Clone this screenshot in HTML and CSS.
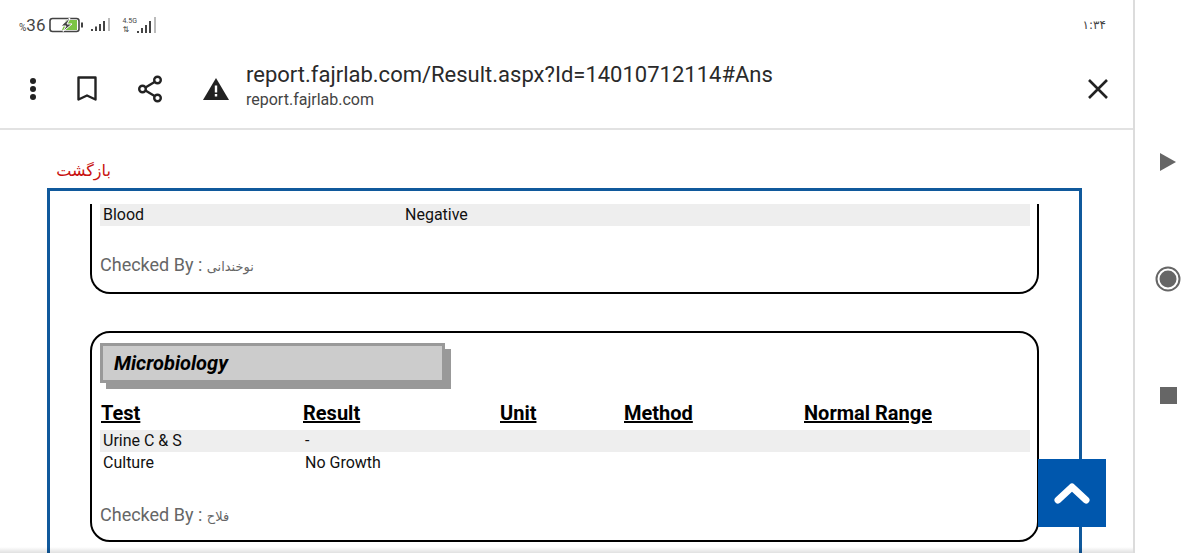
FILE: index.html
```html
<!DOCTYPE html>
<html lang="en">
<head>
    <meta charset="UTF-8">
    <meta name="viewport" content="width=device-width, initial-scale=1.0">
    <title>Result</title>
    <link rel="stylesheet" href="styles.css">
</head>
<body>
    <div class="screen">
        <div class="browser">
            <div class="status-bar">
                <div class="status-left">
                    <span class="battery-pct"><small>%</small>36</span>
                    <svg class="battery" width="36" height="16" viewBox="0 0 36 16">
                        <rect x="1" y="1.5" width="29" height="13" rx="2.5" fill="none" stroke="#444" stroke-width="1.6"/>
                        <path d="M17 3h11v10H13z" fill="#7cc444"/>
                        <path d="M20 1.5 12 9h5l-3 5.5L23 7h-5l3-5.5z" fill="#444" stroke="#fff" stroke-width="1"/>
                        <rect x="32" y="5.5" width="2" height="5" fill="#444"/>
                    </svg>
                    <svg class="signal" width="21" height="14" viewBox="0 0 21 14">
                        <path d="M0 13V11h2v2zM4 13V8.5h2V13zM8 13V6h2v7zM12 13V3h2v10z" fill="#444"/>
                        <path d="M17 13V0h2v13z" fill="#bbb"/>
                    </svg>
                    <div class="network">
                        <div class="network-label">
                            <span>4.5G</span>
                            <span class="arrows">⇅</span>
                        </div>
                        <svg width="21" height="17" viewBox="0 0 21 17">
                            <path d="M0 16v-2h2v2zM4 16v-5h2v5zM8 16V8h2v8zM12 16V4h2v12z" fill="#444"/>
                            <path d="M17 16V0h2v16z" fill="#bbb"/>
                        </svg>
                    </div>
                </div>
                <span class="clock">۱:۳۴</span>
            </div>
            <div class="toolbar">
                <div class="toolbar-icons">
                    <svg width="8" height="24" viewBox="0 0 8 24"><circle cx="4" cy="4" r="3" fill="#222"/><circle cx="4" cy="12" r="3" fill="#222"/><circle cx="4" cy="20" r="3" fill="#222"/></svg>
                    <svg width="20" height="26" viewBox="0 0 20 26"><path d="M1.5 1.5h17v22L10 19.5 1.5 23.5z" fill="none" stroke="#222" stroke-width="2.4" stroke-linejoin="round"/></svg>
                    <svg width="26" height="28" viewBox="0 0 26 28"><path d="M6 14 20 5.500M6 14l14 8.500" stroke="#222" stroke-width="2.400"/><circle cx="5.500" cy="14" r="3.300" fill="#fff" stroke="#222" stroke-width="2.400"/><circle cx="20.500" cy="5" r="3.300" fill="#fff" stroke="#222" stroke-width="2.400"/><circle cx="20.500" cy="23" r="3.300" fill="#fff" stroke="#222" stroke-width="2.400"/></svg>
                    <svg width="26" height="22" viewBox="0 0 26 22"><path d="M13 0 26 22H0z" fill="#222"/><path d="M11.800 7.500h2.400v7h-2.400zM11.800 16h2.400v2.500h-2.400z" fill="#fff"/></svg>
                </div>
                <div class="address">
                    <div class="address-url">report.fajrlab.com/Result.aspx?Id=14010712114#Ans</div>
                    <div class="address-host">report.fajrlab.com</div>
                </div>
                <svg class="close-icon" width="22" height="22" viewBox="0 0 22 22"><path d="M2 2l18 18M20 2 2 20" stroke="#222" stroke-width="2.600"/></svg>
            </div>
            <div class="page">
                <a class="back-link" dir="rtl">بازگشت</a>
                <div class="frame">
                    <div class="card card-cut">
                        <div class="row row-shaded">
                            <span class="col-test">Blood</span>
                            <span>Negative</span>
                        </div>
                        <div class="checked">Checked By : <span class="checked-name">نوخندانی</span></div>
                    </div>
                    <div class="card card-micro">
                        <div class="section-title">Microbiology</div>
                        <div class="table-head">
                            <span>Test</span>
                            <span>Result</span>
                            <span>Unit</span>
                            <span>Method</span>
                            <span>Normal Range</span>
                        </div>
                        <div class="row row-shaded">
                            <span class="col-result">Urine C &amp; S</span>
                            <span>-</span>
                        </div>
                        <div class="row">
                            <span class="col-result">Culture</span>
                            <span>No Growth</span>
                        </div>
                        <div class="checked checked-micro">Checked By : <span class="checked-name">فلاح</span></div>
                    </div>
                </div>
                <div class="to-top">
                    <svg width="36" height="24" viewBox="0 0 36 24"><path d="M4 19 18 6l14 13" fill="none" stroke="#fff" stroke-width="7" stroke-linecap="round" stroke-linejoin="round"/></svg>
                </div>
                <div class="bottom-fade"></div>
            </div>
        </div>
        <div class="nav-rail">
            <svg width="18" height="20" viewBox="0 0 18 20"><path d="M1 1 17 10 1 19z" fill="#666"/></svg>
            <svg width="26" height="26" viewBox="0 0 26 26"><circle cx="13" cy="13" r="11.500" fill="none" stroke="#666" stroke-width="2"/><circle cx="13" cy="13" r="8.500" fill="#666"/></svg>
            <svg width="17" height="17" viewBox="0 0 17 17"><rect width="17" height="17" fill="#666"/></svg>
        </div>
    </div>
</body>
</html>
```

FILE: styles.css
```css
* {
    margin: 0;
    padding: 0;
    box-sizing: border-box;
}

html, body {
    height: 553px;
    overflow: hidden;
}

body {
    font-family: Roboto, "DejaVu Sans", sans-serif;
    background: #fff;
    color: #111;
}

.screen {
    display: flex;
    height: 553px;
}

.browser {
    width: 1135px;
    height: 553px;
    border-right: 2px solid #dcdcdc;
    display: flex;
    flex-direction: column;
}

/* status bar */
.status-bar {
    height: 50px;
    padding: 0 27px 0 19px;
    display: flex;
    justify-content: space-between;
    align-items: center;
}

.status-left {
    display: flex;
    align-items: center;
    color: #444;
}

.battery-pct {
    font-size: 17px;
}

.battery-pct small {
    font-size: 10px;
}

.battery {
    margin-left: 4px;
}

.signal {
    margin-left: 6px;
}

.network {
    margin-left: 10px;
    display: flex;
    align-items: flex-end;
    height: 18px;
}

.network-label {
    display: flex;
    flex-direction: column;
    font-size: 7px;
    line-height: 9px;
    margin-right: 0;
}

.network-label .arrows {
    font-size: 8px;
    line-height: 8px;
}

.clock {
    font-family: "DejaVu Sans", sans-serif;
    font-size: 12px;
    color: #444;
}

/* address bar */
.toolbar {
    height: 80px;
    border-bottom: 2px solid #e2e2e2;
    padding: 0 24px 0 29px;
    display: flex;
    align-items: center;
}

.toolbar-icons {
    width: 217px;
    display: flex;
    align-items: center;
    gap: 0;
    justify-content: space-between;
    padding-right: 17px;
}

.address {
    flex: 1;
    padding-bottom: 6px;
}

.address-url {
    font-size: 22px;
    line-height: 28px;
    color: #2a2a2a;
}

.address-host {
    font-size: 16px;
    line-height: 22px;
    color: #444;
}

/* page */
.page {
    flex: 1;
    position: relative;
    overflow: hidden;
    padding: 30px 0 0 47px;
}

.back-link {
    display: block;
    width: 73px;
    height: 28px;
    color: #c81010;
    font-family: "DejaVu Sans", sans-serif;
    font-size: 16px;
    line-height: 22px;
    text-align: center;
}

.frame {
    width: 1035px;
    height: 420px;
    border: 3px solid #10599c;
    border-bottom: none;
    padding: 13px 0 0 40px;
}

.card {
    width: 949px;
    border: 2px solid #000;
    border-radius: 20px;
    padding: 0 8px;
}

.card-cut {
    height: 90px;
    border-top: none;
    border-top-left-radius: 0;
    border-top-right-radius: 0;
    margin-bottom: 37px;
}

.card-micro {
    height: 211px;
    padding-top: 10px;
}

.row {
    width: 930px;
    height: 22px;
    padding-left: 3px;
    display: flex;
    font-size: 16px;
    line-height: 22px;
    color: #111;
}

.row-shaded {
    background: #eee;
}

.col-test {
    width: 302px;
}

.col-result {
    width: 202px;
}

.checked {
    margin-top: 27px;
    font-size: 18px;
    line-height: 24px;
    color: #666;
}

.checked-micro {
    margin-top: 29px;
}

.checked-name {
    font-family: "DejaVu Sans", sans-serif;
    font-size: 13px;
}

.section-title {
    width: 345px;
    height: 40px;
    background: #ccc;
    border: 3px solid #999;
    box-shadow: 6px 6px 0 #999;
    padding-left: 11px;
    font-size: 20px;
    line-height: 34px;
    font-weight: bold;
    font-style: italic;
    color: #000;
}

.table-head {
    display: grid;
    grid-template-columns: 202px 197px 124px 180px 1fr;
    height: 47px;
    padding: 17px 0 0 1px;
    font-size: 20px;
    line-height: 27px;
    font-weight: bold;
    text-decoration: underline;
    color: #000;
}

.to-top {
    position: absolute;
    left: 1038px;
    top: 329px;
    width: 68px;
    height: 68px;
    background: #0057ad;
    display: flex;
    align-items: center;
    justify-content: center;
}

.bottom-fade {
    position: absolute;
    left: 0;
    right: 0;
    bottom: 0;
    height: 6px;
    background: linear-gradient(rgba(0, 0, 0, 0), rgba(0, 0, 0, 0.12));
}

/* android nav */
.nav-rail {
    flex: 1;
    display: flex;
    flex-direction: column;
    align-items: center;
    padding-top: 152px;
    padding-left: 1px;
    gap: 0;
    height: 553px;
}

.nav-rail svg:nth-child(2) {
    margin-top: 94px;
}

.nav-rail svg:nth-child(3) {
    margin-top: 95px;
}
```
